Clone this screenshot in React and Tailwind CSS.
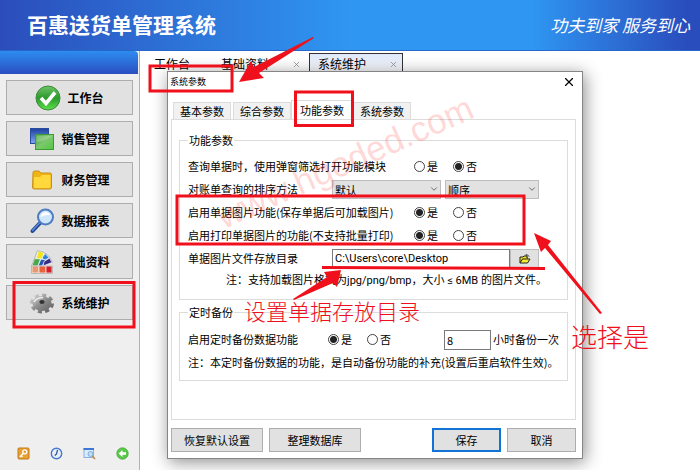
import { X, ChevronDown } from "lucide-react";

function CheckIcon() {
  return (
    <svg width="26" height="26" viewBox="0 0 26 26">
      <defs>
        <linearGradient id="ck" x1="0" y1="0" x2="0" y2="1">
          <stop offset="0" stopColor="#6fc267" />
          <stop offset="0.5" stopColor="#2b9a2b" />
          <stop offset="1" stopColor="#5fe04a" />
        </linearGradient>
      </defs>
      <circle cx="13" cy="13" r="12" fill="url(#ck)" stroke="#3c8a3c" />
      <path d="M6 13 L11 18.500 L20 7.500" fill="none" stroke="#fff" strokeWidth="3.600" />
    </svg>
  );
}

function WindowsIcon() {
  return (
    <svg width="26" height="26" viewBox="0 0 26 26">
      <defs>
        <linearGradient id="wb" x1="0" y1="0" x2="0" y2="1">
          <stop offset="0" stopColor="#1c3f9e" />
          <stop offset="1" stopColor="#7fa8f0" />
        </linearGradient>
        <linearGradient id="wg" x1="0" y1="0" x2="1" y2="1">
          <stop offset="0" stopColor="#3f9e35" />
          <stop offset="0.5" stopColor="#7cc86e" />
          <stop offset="1" stopColor="#4fc93c" />
        </linearGradient>
      </defs>
      <rect x="1.500" y="2.500" width="18" height="15" fill="url(#wb)" stroke="#2a4a9c" />
      <rect x="6.500" y="8.500" width="18" height="15" fill="url(#wg)" stroke="#3c9a32" />
      <path d="M7.500 16 Q16 15 24 9.500 L7.500 9.500Z" fill="#fff" opacity="0.25" />
    </svg>
  );
}

function FolderIcon() {
  return (
    <svg width="26" height="26" viewBox="0 0 26 26">
      <path d="M4 5.500 Q4 4 5.500 4 L10 4 L12 6 L21 6 Q22.500 6 22.500 8 L22.500 20 Q22.500 22 21 22 L5 22 Q3.500 22 3.500 20Z" fill="#f0b414" stroke="#c8901a" />
      <path d="M5 10 L11 10 L13 8 L21.500 8 L21.500 20 Q21.500 21 20.500 21 L6 21 Q5 21 5 20Z" fill="#ffd83c" />
    </svg>
  );
}

function MagnifierIcon() {
  return (
    <svg width="26" height="26" viewBox="0 0 26 26">
      <path d="M11 15 L3.500 23" stroke="#23458f" strokeWidth="4" strokeLinecap="round" />
      <path d="M10.500 15 L3.500 22.500" stroke="#5c8be0" strokeWidth="1.500" strokeLinecap="round" />
      <circle cx="16.500" cy="9" r="7.500" fill="#cfe6fb" stroke="#4d7cc4" strokeWidth="2" />
      <path d="M11.500 9 Q12 4.500 17 4 Q20 4.500 21 7 Q16 6.500 11.500 9Z" fill="#fff" />
    </svg>
  );
}

function SwatchIcon() {
  return (
    <svg width="26" height="26" viewBox="0 0 26 26">
      <g stroke="#fff" strokeWidth="0.700">
        <path d="M7 10 L9.500 1.500 L15 4 L13 10Z" fill="#f0e41e" />
        <path d="M3 17 L5.500 9.500 L11.500 10 L9 17Z" fill="#4aa84a" />
        <path d="M13 9 L16 4.500 L20 8.500 L16 11.500Z" fill="#2f86d8" />
        <path d="M9 17 L12 10 L17 11 L13 17Z" fill="#2458b4" />
        <path d="M15 12.500 L20.500 9 L23 13.500 L14 17Z" fill="#3c2c84" />
        <rect x="3" y="17" width="7" height="7" fill="#e89870" />
        <rect x="10" y="17" width="7" height="7" fill="#e8623c" />
        <rect x="17" y="17" width="6" height="7" fill="#d81e28" />
      </g>
      <path d="M2.500 17 L8.500 1.500 Q20 3 23.500 14 M2.500 17 H23.500 V24.500 H2.500Z" fill="none" stroke="#999" strokeWidth="0.600" />
    </svg>
  );
}

function GearIcon() {
  return (
    <svg width="26" height="26" viewBox="0 0 26 26">
      <defs>
        <linearGradient id="gr" x1="0" y1="0" x2="1" y2="1">
          <stop offset="0" stopColor="#d4d4d4" />
          <stop offset="0.500" stopColor="#8a8a8a" />
          <stop offset="1" stopColor="#626262" />
        </linearGradient>
      </defs>
      <ellipse cx="13" cy="13.500" rx="9.500" ry="7.500" fill="url(#gr)" />
      <ellipse cx="13" cy="13.500" rx="10" ry="8" fill="none" stroke="url(#gr)" strokeWidth="4" strokeDasharray="4 3.050" />
      <path d="M5 12 Q8 7.500 14 7.500" fill="none" stroke="#eee" strokeWidth="1.500" />
      <ellipse cx="13" cy="12" rx="2.600" ry="2" fill="#333" />
    </svg>
  );
}

const navItems = [
  { label: "工作台", Icon: CheckIcon },
  { label: "销售管理", Icon: WindowsIcon },
  { label: "财务管理", Icon: FolderIcon },
  { label: "数据报表", Icon: MagnifierIcon },
  { label: "基础资料", Icon: SwatchIcon },
  { label: "系统维护", Icon: GearIcon },
];

function SidebarTools() {
  return (
    <div className="flex justify-between pr-2.5 pb-2.5 pl-[17px]">
      <button type="button" aria-label="密钥">
        <svg width="13" height="13" viewBox="0 0 13 13">
          <rect x="1" y="1" width="11" height="11" rx="1" fill="#e8a030" stroke="#c07c18" />
          <circle cx="7.800" cy="4.800" r="2" fill="none" stroke="#fff" strokeWidth="1.300" />
          <path d="M6.300 6.300 L2.800 10 M4.200 8.500 L5.600 9.900" stroke="#fff" strokeWidth="1.300" />
        </svg>
      </button>
      <button type="button" aria-label="时间">
        <svg width="13" height="13" viewBox="0 0 13 13">
          <circle cx="6.500" cy="6.500" r="5.200" fill="#e6f0fc" stroke="#4a76cc" strokeWidth="1.400" />
          <path d="M7.500 3 L6.500 7 L4.800 8.500" fill="none" stroke="#2c4c9c" strokeWidth="1.200" />
        </svg>
      </button>
      <button type="button" aria-label="查找">
        <svg width="13" height="13" viewBox="0 0 13 13">
          <rect x="1" y="1.500" width="9.500" height="9" fill="#d8ecff" stroke="#8ab0e4" />
          <rect x="0.500" y="1" width="10.500" height="2" fill="#3c78d8" />
          <circle cx="7.500" cy="7" r="2.500" fill="#b8e0fa" stroke="#7aa0c8" strokeWidth="0.800" />
          <path d="M9.300 9 L12 12" stroke="#c09050" strokeWidth="1.800" />
        </svg>
      </button>
      <button type="button" aria-label="返回">
        <svg width="13" height="13" viewBox="0 0 13 13">
          <circle cx="6.500" cy="6.500" r="5.700" fill="#58c848" stroke="#48a83c" strokeWidth="0.800" />
          <path d="M2.500 6.500 L6.500 3 V5.300 H10 V7.700 H6.500 V10Z" fill="#fff" />
        </svg>
      </button>
    </div>
  );
}

function YesNo({ name, value }) {
  const dot =
    "size-[11px] appearance-none rounded-full border border-[#444] bg-white checked:bg-[radial-gradient(circle,#222_0_3px,#fff_4px)]";
  return (
    <div className="flex gap-[15px]">
      <label className="flex items-center gap-0.5">
        <input type="radio" name={name} defaultChecked={value === "yes"} className={dot} />
        是
      </label>
      <label className="flex items-center gap-0.5">
        <input type="radio" name={name} defaultChecked={value === "no"} className={dot} />
        否
      </label>
    </div>
  );
}

function Choice({ name, label, value }) {
  return (
    <div className="flex h-[23px] items-center" role="radiogroup" aria-label={label}>
      <span className="w-[226px]">{label}</span>
      <YesNo name={name} value={value} />
    </div>
  );
}

function Picker({ id, label, option, className }) {
  return (
    <div className={"relative " + className}>
      <select
        id={id}
        aria-label={label}
        className="block h-[19px] w-full appearance-none border border-[#bdbdbd] bg-[#e2e2e2] pl-0.5 leading-4"
      >
        <option>{option}</option>
      </select>
      <ChevronDown className="pointer-events-none absolute top-1 right-0.5 text-[#555]" size={10} strokeWidth={2} />
    </div>
  );
}

function SettingsDialog() {
  const tab = "border border-b-0 border-[#dcdcdc] bg-[#f1f1f1] px-1.5 leading-4";
  const group = "border border-[#dcdcdc] pl-2";
  const button = "h-6 border border-[#adadad] bg-[#e1e1e1]";
  return (
    <section
      role="dialog"
      aria-label="系统参数"
      className="absolute top-[71px] left-[167px] flex w-[416px] flex-col border border-[#858585] bg-white pr-1.5 pb-1.5 pl-[3px] text-[11px] shadow-[2px_3px_16px_rgba(0,0,0,0.45)]"
    >
      <header className="flex h-5 items-center justify-between text-[9px]">
        <h2 className="-ml-px">系统参数</h2>
        <button type="button" aria-label="关闭">
          <X size={14} strokeWidth={2} />
        </button>
      </header>

      <div className="mt-2 flex items-end" role="tablist">
        <button type="button" role="tab" className={"ml-0.5 " + tab}>基本参数</button>
        <button type="button" role="tab" className={"ml-0.5 " + tab}>综合参数</button>
        <button type="button" role="tab" aria-selected="true" className="border border-b-0 border-[#dcdcdc] px-2 leading-[18px]">
          功能参数
        </button>
        <button type="button" role="tab" className={tab}>系统参数</button>
      </div>

      <form className="border border-[#dcdcdc] px-[7px] pt-3 pb-[38px]">
        <fieldset className={group + " pt-[7px] pb-1.5"}>
          <legend className="px-px leading-4">功能参数</legend>
          <Choice name="popup" label="查询单据时，使用弹窗筛选打开功能模块" value="no" />
          <div className="flex h-[23px] items-center">
            <label htmlFor="sort" className="w-36">对账单查询的排序方法</label>
            <Picker id="sort" label="对账单查询的排序方法" option="默认" className="w-[109px]" />
            <Picker id="order" label="顺序" option="顺序" className="ml-1 w-[94px]" />
          </div>
          <Choice name="picture" label="启用单据图片功能(保存单据后可加载图片)" value="yes" />
          <Choice name="print" label="启用打印单据图片的功能(不支持批量打印)" value="yes" />
          <div className="flex h-[23px] items-center">
            <label htmlFor="folder" className="w-36">单据图片文件存放目录</label>
            <input
              id="folder"
              defaultValue="C:\Users\core\Desktop"
              className="h-[19px] w-[178px] border border-[#7a7a7a] bg-white px-0.5 font-['Roboto',sans-serif]"
            />
            <button type="button" aria-label="浏览" className="flex h-[19px] w-[29px] items-center justify-center border border-[#bdbdbd] bg-[#e1e1e1]">
              <svg width="12" height="10" viewBox="0 0 12 10">
                <path d="M1 9 V3 H4 L5 2 H8 V4 H9" fill="#f0e020" stroke="#222" />
                <path d="M1 9 L3.500 5 H11 L8.500 9Z" fill="#f8ec30" stroke="#222" />
                <path d="M6.500 1 Q8.500 0 10 2.500" fill="none" stroke="#222" />
              </svg>
            </button>
          </div>
          <p className="flex h-[23px] items-center pl-[38px] font-['Roboto','Noto_Sans_CJK_SC',sans-serif] whitespace-pre">注：支持加载图片格式为jpg/png/bmp，大小 ≤ 6MB 的图片文件。</p>
        </fieldset>

        <fieldset className={"mt-1 pt-2 pb-1.5 " + group}>
          <legend className="px-px leading-4">定时备份</legend>
          <div className="flex h-[23px] items-center">
            <span className="w-[140px]">启用定时备份数据功能</span>
            <YesNo name="backup" value="yes" />
            <label className="ml-[53px] flex items-center gap-0.5">
              <input defaultValue="8" className="h-5 w-[47px] border border-[#7a7a7a] bg-white px-0.5" />
              小时备份一次
            </label>
          </div>
          <p className="flex h-[23px] items-center">注：本定时备份数据的功能，是自动备份功能的补充(设置后重启软件生效)。</p>
        </fieldset>
      </form>

      <footer className="mt-2 flex gap-1.5">
        <button type="button" className={"w-[92px] " + button}>恢复默认设置</button>
        <button type="button" className={"w-[92px] " + button}>整理数据库</button>
        <button type="button" className="ml-auto h-6 w-[69px] border-2 border-[#0f74d6] bg-[#e1e1e1]">保存</button>
        <button type="button" className={"w-[69px] " + button}>取消</button>
      </footer>
    </section>
  );
}

function Annotations() {
  return (
    <div className="pointer-events-none absolute top-0 left-0">
      <svg width="700" height="470" viewBox="0 0 700 470" fill="none" stroke="#f0101c" strokeWidth="3">
        <rect x="150" y="66" width="82" height="25" />
        <rect x="295.500" y="92" width="57" height="33.500" />
        <rect x="14" y="282.500" width="120" height="44.500" />
        <rect x="177" y="196" width="347" height="48" />
        <path d="M322 267.500 L545 268.500" />
        <g fill="#f0101c" stroke="none">
          <path d="M239 82 L251 61 L254 67 L313 37 L314 38 L259 73 L264 78Z" />
          <path d="M341 270 L324 272 L327 277 L293 299 L294 300 L333 283 L337 287Z" />
          <path d="M534 233 L541 252 L545 248 L600 314 L602 313 L548 245 L551 241Z" />
        </g>
      </svg>
      <p className="absolute top-[294px] left-[244px] font-['Noto_Sans_CJK_SC',sans-serif] text-[22px] font-light whitespace-nowrap text-[#f0101c]">
        设置单据存放目录
      </p>
      <p className="absolute top-[316px] left-[571px] font-['Noto_Sans_CJK_SC',sans-serif] text-[26px] font-light whitespace-nowrap text-[#f0101c]">
        选择是
      </p>
      <p className="absolute top-[136px] left-[207px] -rotate-[24deg] font-['Liberation_Sans',sans-serif] text-[35px] whitespace-nowrap text-[#ff3030]/20">
        www.hgoded.com
      </p>
    </div>
  );
}

export default function App() {
  return (
    <div className="relative flex min-h-screen flex-col overflow-hidden bg-white font-['Noto_Sans_CJK_SC',sans-serif] text-black">
      <header className="flex h-[51px] items-center justify-between border-b border-[#2668c8] bg-[linear-gradient(90deg,#2b4dbb_0%,#2f96f2_50%,#2f96f2_76%,#2a4dbd_98%)] pr-2.5 pl-[27px] text-white">
        <h1 className="text-[21px] font-bold">百惠送货单管理系统</h1>
        <p className="text-[17px] italic">功夫到家 服务到心</p>
      </header>

      <div className="flex flex-1">
        <aside className="flex w-[140px] flex-col justify-between border-r border-[#8cb8ec] bg-[#efefef]">
          <div>
            <div className="mr-px h-[23px] rounded-tr bg-[linear-gradient(180deg,#2d8cf0,#2a4fc0)]" />
            <nav className="flex flex-col gap-1.5 px-1.5 pt-1.5">
              {navItems.map(({ label, Icon }) => (
                <button
                  key={label}
                  type="button"
                  className="flex h-[35px] items-center justify-center gap-1.5 border border-[#adadad] bg-[#e1e1e1] text-xs font-bold"
                >
                  <Icon />
                  {label}
                </button>
              ))}
            </nav>
          </div>
          <SidebarTools />
        </aside>

        <main className="flex-1 pt-0.5">
          <nav className="flex h-[22px] items-center text-xs">
            <a href="#desk" className="ml-3.5">工作台</a>
            <a href="#base" className="ml-[31px] flex items-center gap-[23px]">
              基础资料
              <X size={9} className="text-[#888]" />
            </a>
            <a
              href="#system"
              className="ml-2 flex h-full items-center gap-[23px] border border-[#333] bg-[linear-gradient(180deg,#dfe8fa,#fff)] pr-1 pl-2"
            >
              系统维护
              <X size={9} className="text-[#888]" />
            </a>
          </nav>
        </main>
      </div>

      <SettingsDialog />
      <Annotations />
    </div>
  );
}
